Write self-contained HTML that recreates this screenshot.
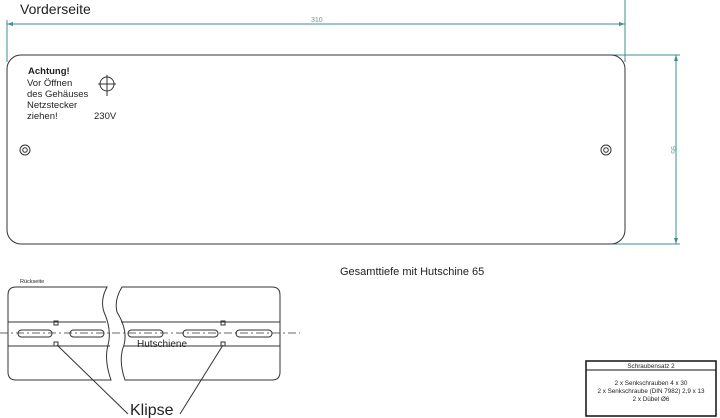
<!DOCTYPE html>
<html><head><meta charset="utf-8"><style>
html,body{margin:0;padding:0;background:#fff;width:720px;height:418px;overflow:hidden}
svg{display:block}
text{font-family:"Liberation Sans",sans-serif;fill:#222}
</style></head><body>
<svg width="720" height="418" viewBox="0 0 720 418" xmlns="http://www.w3.org/2000/svg">
<text x="20" y="14" font-size="14">Vorderseite</text>
<g stroke="#3f8f8f" stroke-width="1" fill="none">
<line x1="7" y1="24" x2="625" y2="24"/>
<line x1="7" y1="20" x2="7" y2="62"/>
<line x1="625" y1="0" x2="625" y2="62"/>
<line x1="612" y1="55" x2="680" y2="55"/>
<line x1="612" y1="244" x2="680" y2="244"/>
<line x1="676" y1="55" x2="676" y2="244"/>
</g>
<g fill="#3f8f8f"><path d="M7 24 l6 -2 v4z"/><path d="M625 24 l-6 -2 v4z"/><path d="M676 55 l-2 6 h4z"/><path d="M676 244 l-2 -6 h4z"/></g>
<text x="311" y="22" font-size="7" style="fill:#6a9a9a">310</text>
<text x="0" y="0" font-size="7" style="fill:#6a9a9a" transform="translate(671,146) rotate(90)">95</text>
<rect x="7" y="55" width="618" height="189" rx="14" fill="none" stroke="#333" stroke-width="1"/>
<g fill="none" stroke="#333"><circle cx="25" cy="150" r="5"/><circle cx="25" cy="150" r="2.3"/><circle cx="606" cy="150" r="5"/><circle cx="606" cy="150" r="2.3"/>
<circle cx="107" cy="84" r="7"/><line x1="107" y1="75" x2="107" y2="96"/><line x1="98" y1="84" x2="116" y2="84"/></g>
<text x="28" y="74" font-size="9.5" font-weight="bold">Achtung!</text>
<text x="27" y="86" font-size="9.5">Vor Öffnen</text>
<text x="27" y="97" font-size="9.5">des Gehäuses</text>
<text x="27" y="108" font-size="9.5">Netzstecker</text>
<text x="27" y="119" font-size="9.5">ziehen!</text>
<text x="94" y="119" font-size="9.5">230V</text>
<text x="340" y="275" font-size="11">Gesamttiefe mit Hutschine 65</text>
<text x="20" y="283" font-size="5.5">Rückseite</text>
<g fill="none" stroke="#333" stroke-width="1">
<path d="M107 287 H16 Q8 287 8 295 V372 Q8 380 16 380 H111 Q104 360 108 345 Q112 330 104 312 Q100 300 107 287Z"/>
<path d="M122 287 H272 Q280 287 280 295 V372 Q280 380 272 380 H125 Q118 360 124 345 Q128 330 117 312 Q114 300 122 287Z"/>
<line x1="8" y1="322" x2="106" y2="322"/><line x1="8" y1="346" x2="110" y2="346"/>
<line x1="121" y1="322" x2="280" y2="322"/><line x1="124" y1="346" x2="280" y2="346"/>
<rect x="18" y="330" width="34" height="7" rx="3.5"/><rect x="70" y="330" width="34" height="7" rx="3.5"/>
<rect x="128" y="330" width="35" height="7" rx="3.5"/><rect x="183" y="330" width="35" height="7" rx="3.5"/><rect x="236" y="330" width="36" height="7" rx="3.5"/>
<rect x="54" y="321" width="4" height="4"/><rect x="54" y="342" width="4" height="4"/>
<rect x="221" y="321" width="4" height="4"/><rect x="221" y="342" width="4" height="4"/>
<line x1="57" y1="345" x2="128" y2="414"/><line x1="223" y1="345" x2="180" y2="414"/>
<line x1="0" y1="333" x2="300" y2="333" stroke-dasharray="8 3 2 3" stroke-width="0.8"/>
</g>
<text x="137" y="347" font-size="10">Hutschiene</text>
<text x="130" y="415" font-size="16">Klipse</text>
<rect x="586" y="361" width="130" height="55" fill="none" stroke="#111" stroke-width="1.5"/>
<line x1="586" y1="370" x2="716" y2="370" stroke="#111" stroke-width="1"/>
<g font-size="6.3" text-anchor="middle"><text x="651" y="368">Schraubensatz 2</text>
<text x="651" y="385">2 x  Senkschrauben 4 x 30</text>
<text x="651" y="393">2 x Senkschraube (DIN 7982) 2,9 x 13</text>
<text x="651" y="401">2 x Dübel Ø6</text></g>
</svg>
</body></html>
